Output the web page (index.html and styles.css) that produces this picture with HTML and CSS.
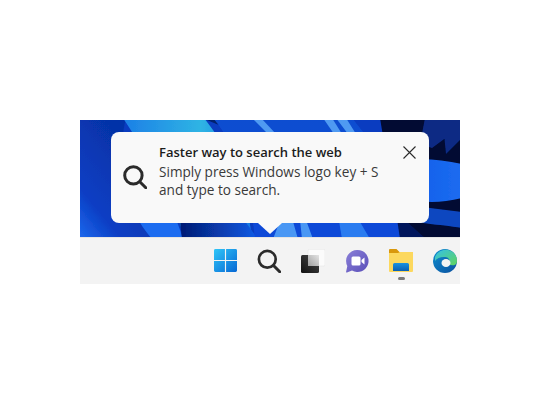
FILE: index.html
```html
<!DOCTYPE html>
<html lang="en">
<head>
<meta charset="utf-8">
<title>Search tip</title>
<link rel="stylesheet" href="styles.css">
</head>
<body>
<main class="screen">
  <section class="desktop">
    <svg class="wallpaper" viewBox="0 0 380 117" preserveAspectRatio="none" aria-hidden="true">
      <defs>
        <linearGradient id="wpLeft" x1="0" y1="1" x2=".6" y2=".2"><stop offset="0" stop-color="#1e6bf0"/><stop offset=".35" stop-color="#0a3ec4"/><stop offset="1" stop-color="#0633a8"/></linearGradient>
        <linearGradient id="wpSky" x1="0" y1="0" x2="1" y2="0"><stop offset="0" stop-color="#1c7fe6"/><stop offset=".6" stop-color="#2fb4e4"/><stop offset="1" stop-color="#1678e4"/></linearGradient>
        <linearGradient id="wpMid" x1="0" y1="0" x2="0" y2="1"><stop offset="0" stop-color="#0f4ed0"/><stop offset="1" stop-color="#0a48d8"/></linearGradient>
        <linearGradient id="wpNavy" x1="0" y1="0" x2="1" y2="0"><stop offset="0" stop-color="#031a72"/><stop offset="1" stop-color="#0c5be6"/></linearGradient>
        <linearGradient id="wpWave" x1="0" y1="0" x2="1" y2="0"><stop offset="0" stop-color="#0a3cc0"/><stop offset=".6" stop-color="#1463ec"/><stop offset="1" stop-color="#1d6cf0"/></linearGradient>
        <filter id="soft" x="0" y="0" width="100%" height="100%"><feGaussianBlur stdDeviation=".7"/></filter>
      </defs>
      <rect width="380" height="117" fill="#0a3cc0"/>
      <path d="M300 -2H382V119H320Z" fill="#020b33"/>
      <g filter="url(#soft)">
        <path d="M-2 -2H46C38 30 40 80 72 119H-2Z" fill="url(#wpLeft)"/>
        <path d="M43 -2H124C150 30 168 75 172 119H104C95 75 70 40 43 -2Z" fill="url(#wpSky)"/>
        <path d="M36 30C42 70 55 100 72 119H103C90 75 65 50 36 30Z" fill="#1a6cf0"/>
        <path d="M102 119C98 80 95 60 120 40L178 119Z" fill="url(#wpNavy)"/>
        <path d="M122 -2H165L205 40L175 20Z" fill="#04206e"/>
        <path d="M133 -2H272L305 40L322 119H175C170 70 160 30 133 -2Z" fill="url(#wpMid)"/>
        <path d="M172 -2H181L196 14H188ZM243 -2H252L262 14H254ZM256 -2H266L276 14H268Z" fill="#4f9af2"/>
        <path d="M193 119L201 98H212L218 119ZM222 119L220 100H226L233 119Z" fill="#4a97f4"/>
        <path d="M262 119L258 95H276L290 119Z" fill="#2a7cf0"/>
        <path d="M345 -2L382 -2V6L352 28L340 24ZM364 14L382 4V18L366 34Z" fill="#0b2a84"/>
        <path d="M300 48C325 36 352 38 382 44V78C355 84 335 84 318 72Z" fill="url(#wpWave)"/>
        <path d="M318 84L382 92V108C358 104 335 104 328 98Z" fill="#0f47c0"/>
        <path d="M320 119H346L316 92Z" fill="#05195c"/>
      </g>
    </svg>
    <aside class="callout">
      <svg class="callout-search" viewBox="0 0 24 24" aria-hidden="true">
        <circle cx="10.400" cy="10.400" r="8.700" fill="none" stroke="#2b2b2b" stroke-width="3"/>
        <path d="M16.800 16.800L22.800 22.800" stroke="#2b2b2b" stroke-width="3" stroke-linecap="round"/>
      </svg>
      <div class="callout-text">
        <h1 class="callout-title">Faster way to search the web</h1>
        <p class="callout-body">Simply press Windows logo key + S<br>and type to search.</p>
      </div>
      <svg class="callout-close" viewBox="0 0 13 13" aria-hidden="true">
        <path d="M.5 .5L12.500 12.500M12.500 .5L.5 12.500" stroke="#2a2a2a" stroke-width="1.100" fill="none"/>
      </svg>
      <span class="callout-arrow"></span>
    </aside>
  </section>
  <nav class="taskbar">
    <span class="task-item">
      <svg class="icon icon-win" viewBox="0 0 24 24" aria-hidden="true">
        <defs><linearGradient id="win" x1="0" y1="0" x2="1" y2="1"><stop offset="0" stop-color="#2fc6f8"/><stop offset="1" stop-color="#0667d4"/></linearGradient></defs>
        <path d="M0 1.500A1.500 1.500 0 0 1 1.500 0H11.400V11.400H0ZM12.600 0H22.500A1.500 1.500 0 0 1 24 1.500V11.400H12.600ZM0 12.600H11.400V24H1.500A1.500 1.500 0 0 1 0 22.500ZM12.600 12.600H24V22.500A1.500 1.500 0 0 1 22.500 24H12.600Z" fill="url(#win)"/>
      </svg>
    </span>
    <span class="task-item">
      <svg class="icon" viewBox="0 0 24 24" aria-hidden="true">
        <circle cx="10.300" cy="10.300" r="8.400" fill="none" stroke="#2b2b2b" stroke-width="2.700"/>
        <path d="M16.500 16.500L22.700 22.700" stroke="#2b2b2b" stroke-width="3" stroke-linecap="round"/>
      </svg>
    </span>
    <span class="task-item">
      <svg class="icon" viewBox="0 0 24 24" aria-hidden="true">
        <defs>
          <linearGradient id="tvA" x1="0" y1="1" x2="1" y2="0"><stop offset="0" stop-color="#111"/><stop offset="1" stop-color="#4a4a4a"/></linearGradient>
          <linearGradient id="tvB" x1="0" y1="1" x2="1" y2="0"><stop offset="0" stop-color="#a0a0a0"/><stop offset="1" stop-color="#e4e4e4"/></linearGradient>
        </defs>
        <rect x="7" y=".3" width="17" height="16.700" rx="1.500" fill="#fbfbfb" stroke="#e2e2e2" stroke-width=".5"/>
        <rect x="0" y="6" width="18" height="18" rx="1.500" fill="url(#tvA)"/>
        <rect x="7" y="6" width="11" height="11" fill="url(#tvB)"/>
      </svg>
    </span>
    <span class="task-item">
      <svg class="icon" viewBox="0 0 24 24" aria-hidden="true">
        <defs><linearGradient id="chat" x1="0" y1="0" x2="1" y2="1"><stop offset="0" stop-color="#8a7fd8"/><stop offset="1" stop-color="#5a4fb8"/></linearGradient></defs>
        <path d="M12.500 1A11 11 0 1 1 7 21.500L2 23.500C1.400 23.700 1 23.300 1.100 22.700L2.300 17A11 11 0 0 1 12.500 1Z" fill="url(#chat)"/>
        <rect x="6.500" y="7.500" width="9" height="9" rx="1.500" fill="#fff"/>
        <path d="M16.500 11L19.500 8.500V15.500L16.500 13Z" fill="#fff"/>
      </svg>
    </span>
    <span class="task-item">
      <svg class="icon" viewBox="0 0 24 24" aria-hidden="true">
        <defs><linearGradient id="doc" x1="0" y1="0" x2="0" y2="1"><stop offset="0" stop-color="#1b92e0"/><stop offset="1" stop-color="#0a5fb4"/></linearGradient></defs>
        <path d="M0 1A1 1 0 0 1 1 0H7.500L10.500 3H23A1 1 0 0 1 24 4V8H0Z" fill="#d9980c"/>
        <path d="M0 4H9L11 3H24V22A1 1 0 0 1 23 23H1A1 1 0 0 1 0 22Z" fill="#fcd85e"/>
        <path d="M4 15.500A1.500 1.500 0 0 1 5.500 14H18.500A1.500 1.500 0 0 1 20 15.500V22H4Z" fill="url(#doc)"/>
      </svg>
      <span class="running-dot"></span>
    </span>
    <span class="task-item">
      <svg class="icon" viewBox="0 0 24 24" aria-hidden="true">
        <defs>
          <linearGradient id="edgeA" x1="0" y1="0" x2="1" y2="1"><stop offset="0" stop-color="#0f8fd0"/><stop offset="1" stop-color="#0a4f9e"/></linearGradient>
          <linearGradient id="edgeB" x1="0" y1="0" x2="1" y2="1"><stop offset="0" stop-color="#35c1e8"/><stop offset="1" stop-color="#5fd45a"/></linearGradient>
        </defs>
        <circle cx="12" cy="12" r="12" fill="url(#edgeA)"/>
        <path d="M2 8C5 1 13 -1 19 2.500C23 5 24.500 9.500 23.800 13.500C23 16.500 19 17 16 15.500C18 13 16.500 8.500 12.500 8C8 7.500 4 9 2 12Z" fill="url(#edgeB)"/>
        <ellipse cx="13" cy="14" rx="4.500" ry="4" fill="#f3f3f3"/>
      </svg>
    </span>
  </nav>
</main>
</body>
</html>
```

FILE: styles.css
```css
* { box-sizing: border-box; }

html, body { margin: 0; background: #fff; }

body {
  width: 540px;
  height: 405px;
  padding: 120px 80px 0;
  font-family: "Open Sans", "Noto Sans", sans-serif;
}

.screen {
  width: 380px;
  height: 164px;
  display: flex;
  flex-direction: column;
  overflow: hidden;
}

.desktop {
  position: relative;
  height: 117px;
  padding: 12px 31px 14px;
}

.wallpaper {
  position: absolute;
  inset: 0;
  width: 100%;
  height: 100%;
  display: block;
}

.callout {
  position: relative;
  height: 91px;
  width: 318px;
  background: #f9f9f9;
  border-radius: 8px;
  display: flex;
  align-items: flex-start;
  padding: 12px 13px 0 12px;
  color: #222;
}

.callout-search {
  width: 24px;
  height: 24px;
  margin-top: 21px;
  flex: none;
}

.callout-text {
  margin-left: 12px;
  flex: 1;
}

.callout-title {
  margin: 0 0 2px;
  font-size: 13px;
  line-height: 17px;
  font-weight: 600;
  color: #1c1c1c;
}

.callout-body {
  margin: 0;
  font-size: 13.600px;
  line-height: 18px;
  color: #3a3a3a;
}

.callout-close {
  width: 13px;
  height: 13px;
  margin-top: 2px;
  flex: none;
}

.callout-arrow {
  position: absolute;
  left: 147px;
  top: 91px;
  width: 0;
  height: 0;
  border-left: 12px solid transparent;
  border-right: 12px solid transparent;
  border-top: 11px solid #f9f9f9;
}

.taskbar {
  flex: 1;
  background: #f3f3f3;
  border-top: 1px solid #e4e4e4;
  display: flex;
  padding-left: 123px;
}

.task-item {
  flex: none;
  width: 44px;
  display: flex;
  flex-direction: column;
  align-items: center;
  padding-top: 11px;
  gap: 4px;
}

.icon {
  width: 24px;
  height: 24px;
  display: block;
}

.icon-win {
  width: 23px;
  height: 23px;
}

.running-dot {
  width: 7px;
  height: 3px;
  border-radius: 2px;
  background: #7a7a7a;
}
```
